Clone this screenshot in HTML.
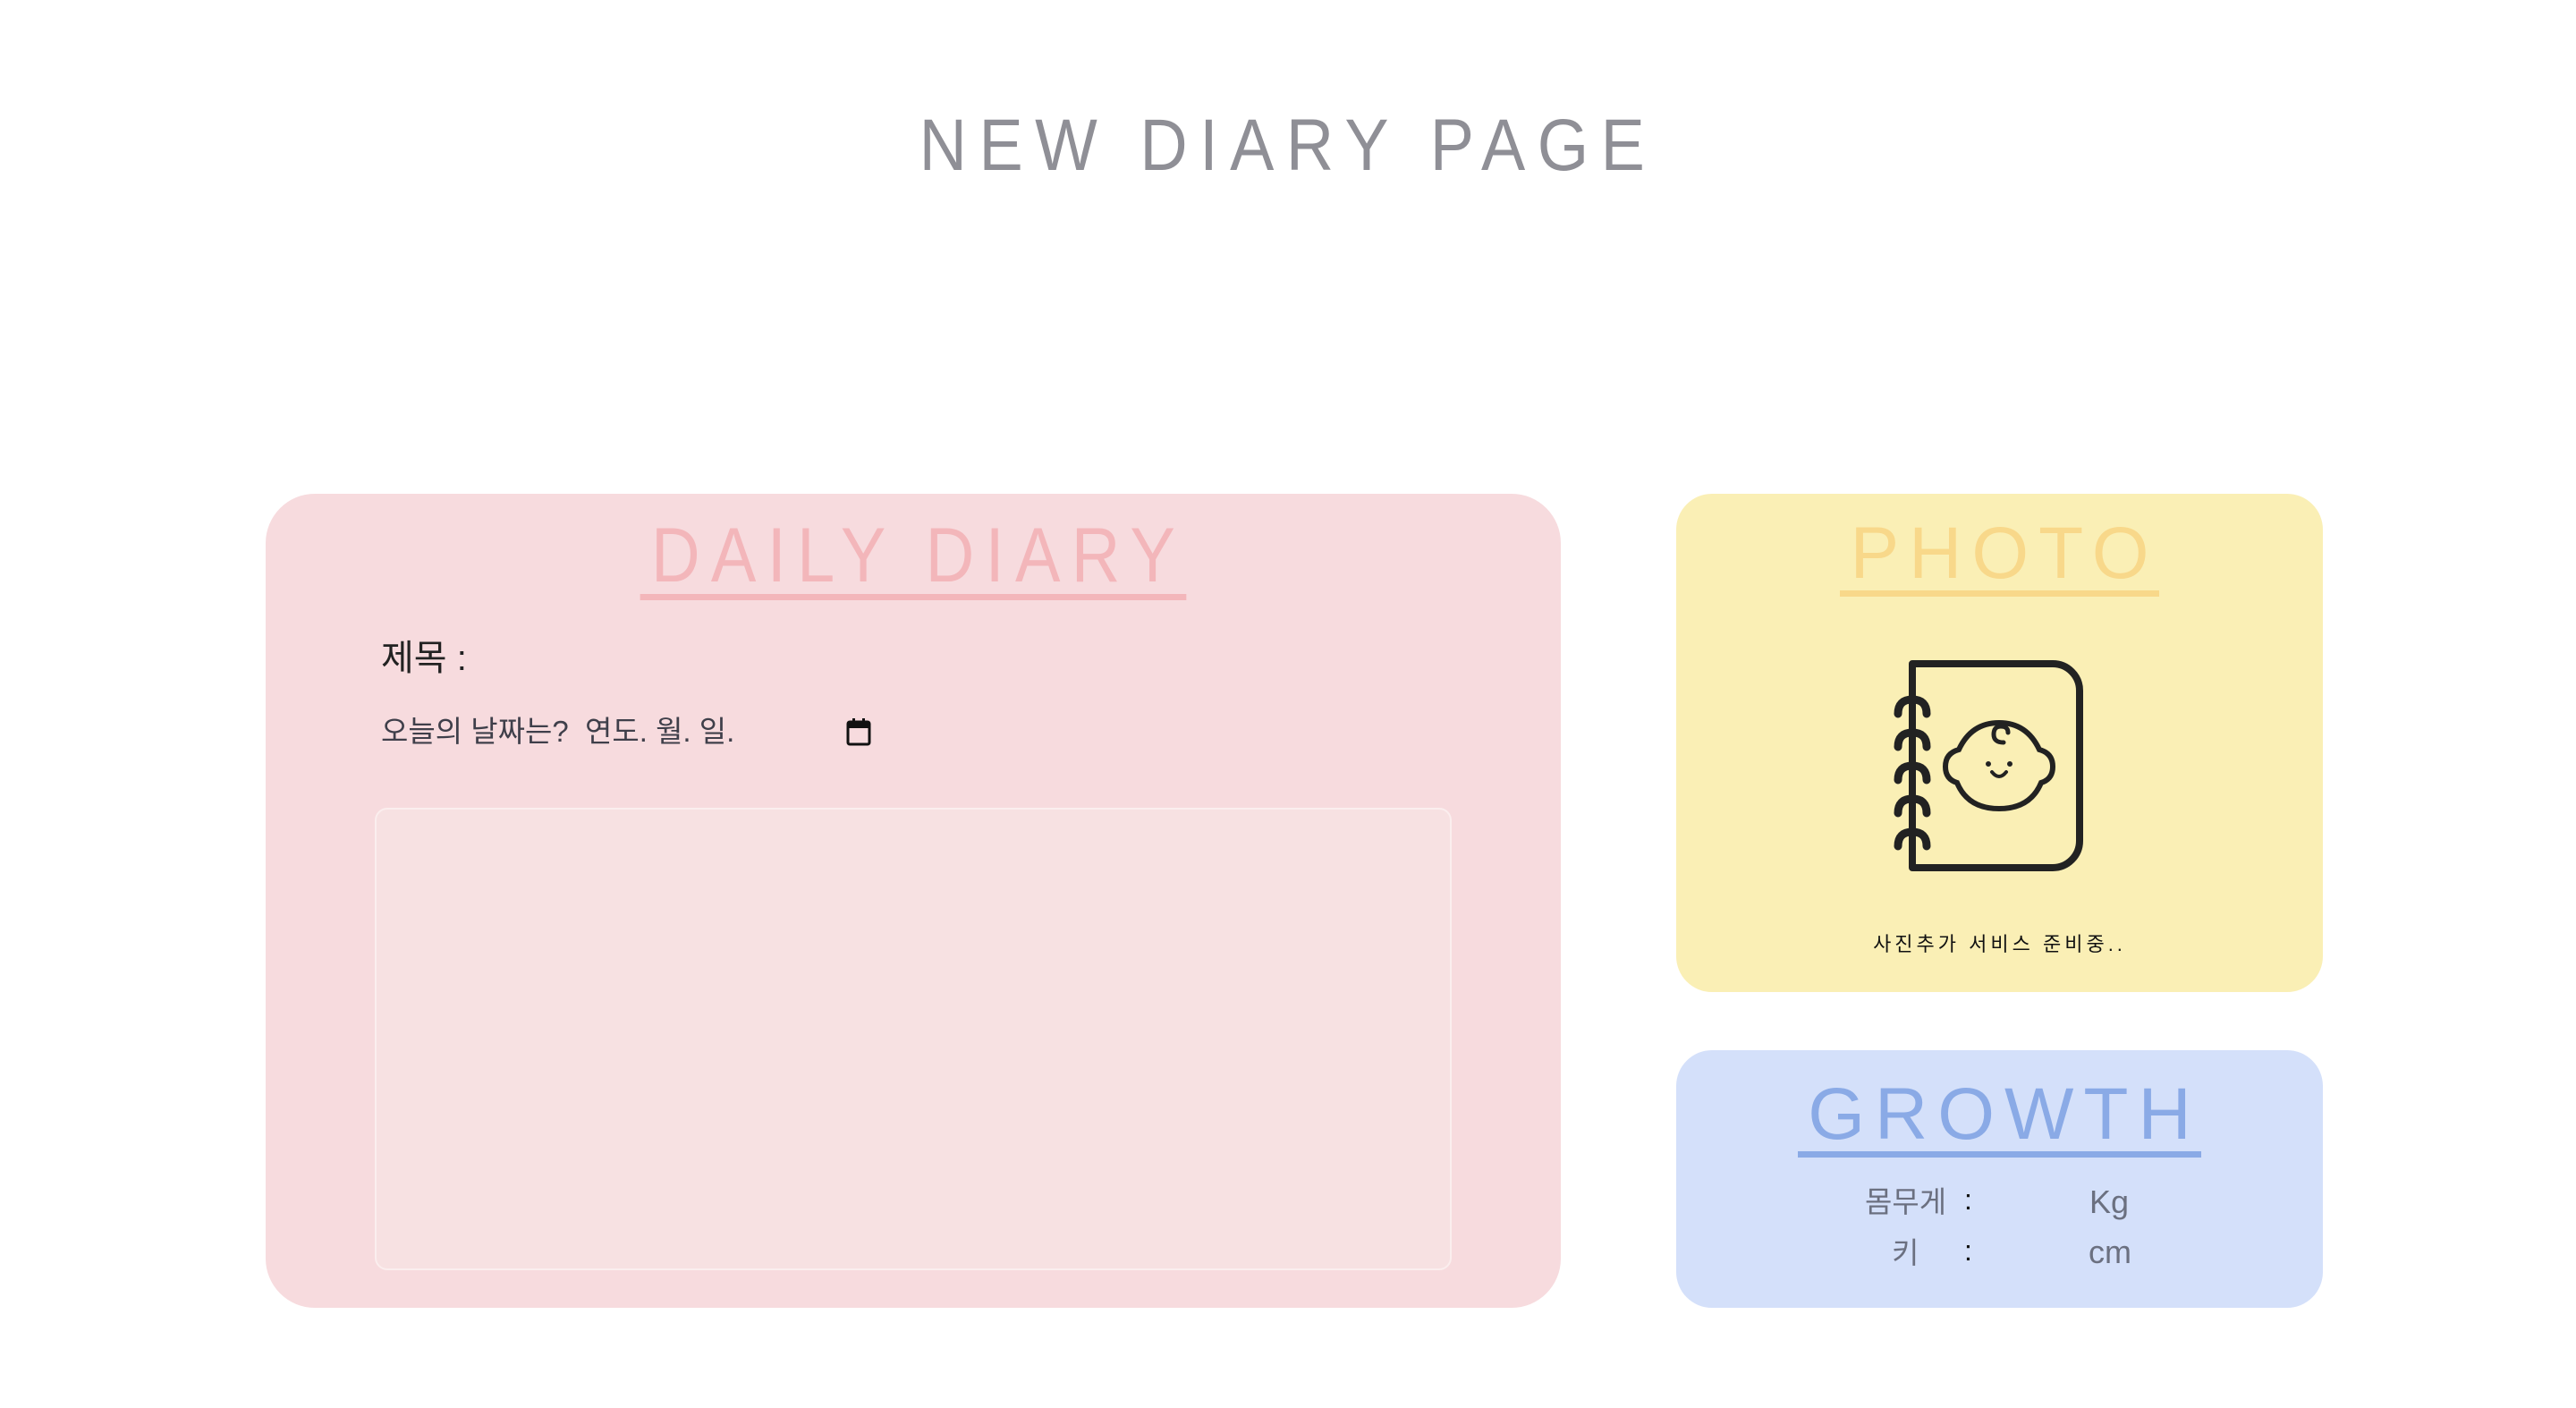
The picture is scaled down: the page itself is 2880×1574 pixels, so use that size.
<!DOCTYPE html>
<html><head><meta charset="utf-8">
<style>
body{margin:0;width:2880px;height:1574px;background:#fff;position:relative;overflow:hidden;font-family:"Liberation Sans","Noto Sans CJK KR",sans-serif}
.a{position:absolute;line-height:1;white-space:nowrap}
.h{position:absolute;left:0;width:2880px;text-align:center;font-weight:400;white-space:nowrap}
.card{position:absolute;border-radius:55px}
.t{position:absolute;text-align:center;white-space:nowrap;line-height:1}
.t span{display:inline-block;border-bottom:7px solid;padding-bottom:0;line-height:1}
</style></head><body>
<div class="h" style="top:122px;font-size:82px;line-height:1;color:#8f8f96;letter-spacing:15px;transform:scaleX(.9)">NEW DIARY PAGE</div>

<div class="card" style="left:297px;top:552px;width:1448px;height:910px;background:#f7dbde"></div>
<div class="t" style="left:297px;width:1448px;top:578px;font-size:86px;color:#f3b6ba;letter-spacing:14px"><span style="transform:scaleX(.88);padding-left:14px;margin-top:-2px">DAILY DIARY</span></div>
<div class="a" style="left:426px;top:716px;font-size:40px;color:#222">제목 :</div>
<div class="a" style="left:426px;top:801px;font-size:33px;color:#3f3f4a">오늘의 날짜는? &nbsp;연도. 월. 일.</div>
<svg class="a" style="left:946px;top:802px" width="28" height="32" viewBox="0 0 28 32"><rect x="2" y="5" width="24" height="25" rx="2" fill="none" stroke="#111" stroke-width="3"/><rect x="2" y="5" width="24" height="7" fill="#111"/><rect x="7" y="1" width="3" height="6" fill="#111"/><rect x="18" y="1" width="3" height="6" fill="#111"/></svg>
<div class="a" style="left:419px;top:903px;width:1200px;height:513px;background:#f7e1e2;border:2px solid #fbeeee;border-radius:14px"></div>

<div class="card" style="left:1874px;top:552px;width:723px;height:557px;background:#faefb5;border-radius:40px"></div>
<div class="t" style="left:1874px;width:723px;top:578px;font-size:82px;color:#f8d88a;letter-spacing:11px"><span style="padding-left:11px">PHOTO</span></div>
<svg class="a" style="left:2110px;top:730px" width="250" height="260" viewBox="0 0 250 260" fill="none" stroke="#222" stroke-width="8" stroke-linecap="round">
<path d="M28 12 H185 A30 30 0 0 1 215 42 V210 A30 30 0 0 1 185 240 H28 Z" stroke-linejoin="round"/>
<g stroke-width="9"><path d="M12 68 Q12 52 28 52 Q44 52 44 68"/><path d="M12 105 Q12 89 28 89 Q44 89 44 105"/><path d="M12 142 Q12 126 28 126 Q44 126 44 142"/><path d="M12 179 Q12 163 28 163 Q44 163 44 179"/><path d="M12 216 Q12 200 28 200 Q44 200 44 216"/></g>
<path stroke-width="6" d="M80 108 Q94 78 125 78 Q156 78 170 108 Q185 112 185 127 Q185 141 172 145 Q160 174 125 174 Q90 174 78 145 Q65 141 65 127 Q65 112 80 108 Z"/>
<path stroke-width="5" d="M130 100 Q119 100 119 91 Q119 82 127 82 Q135 82 135 89"/>
<circle cx="113" cy="124" r="2" fill="#222" stroke-width="2"/><circle cx="137" cy="124" r="2" fill="#222" stroke-width="2"/>
<path stroke-width="4" d="M117 133 Q125 143 133 133"/>
</svg>
<div class="t" style="left:1874px;width:723px;top:1045px;font-size:22px;color:#111;letter-spacing:4px">사진추가 서비스 준비중..</div>

<div class="card" style="left:1874px;top:1174px;width:723px;height:288px;background:#d4e0fa;border-radius:40px"></div>
<div class="t" style="left:1874px;width:723px;top:1205px;font-size:82px;color:#8aaae6;letter-spacing:11px"><span style="padding-left:11px;margin-top:-3px">GROWTH</span></div>
<div class="a" style="left:2085px;top:1327px;font-size:33px;color:#6b7080">몸무게</div>
<div class="a" style="left:2196px;top:1325px;font-size:32px;color:#111">:</div>
<div class="a" style="left:2336px;top:1326px;font-size:36px;color:#6b7080">Kg</div>
<div class="a" style="left:2115px;top:1384px;font-size:33px;color:#6b7080">키</div>
<div class="a" style="left:2196px;top:1382px;font-size:32px;color:#111">:</div>
<div class="a" style="left:2335px;top:1382px;font-size:36px;color:#6b7080">cm</div>
</body></html>
